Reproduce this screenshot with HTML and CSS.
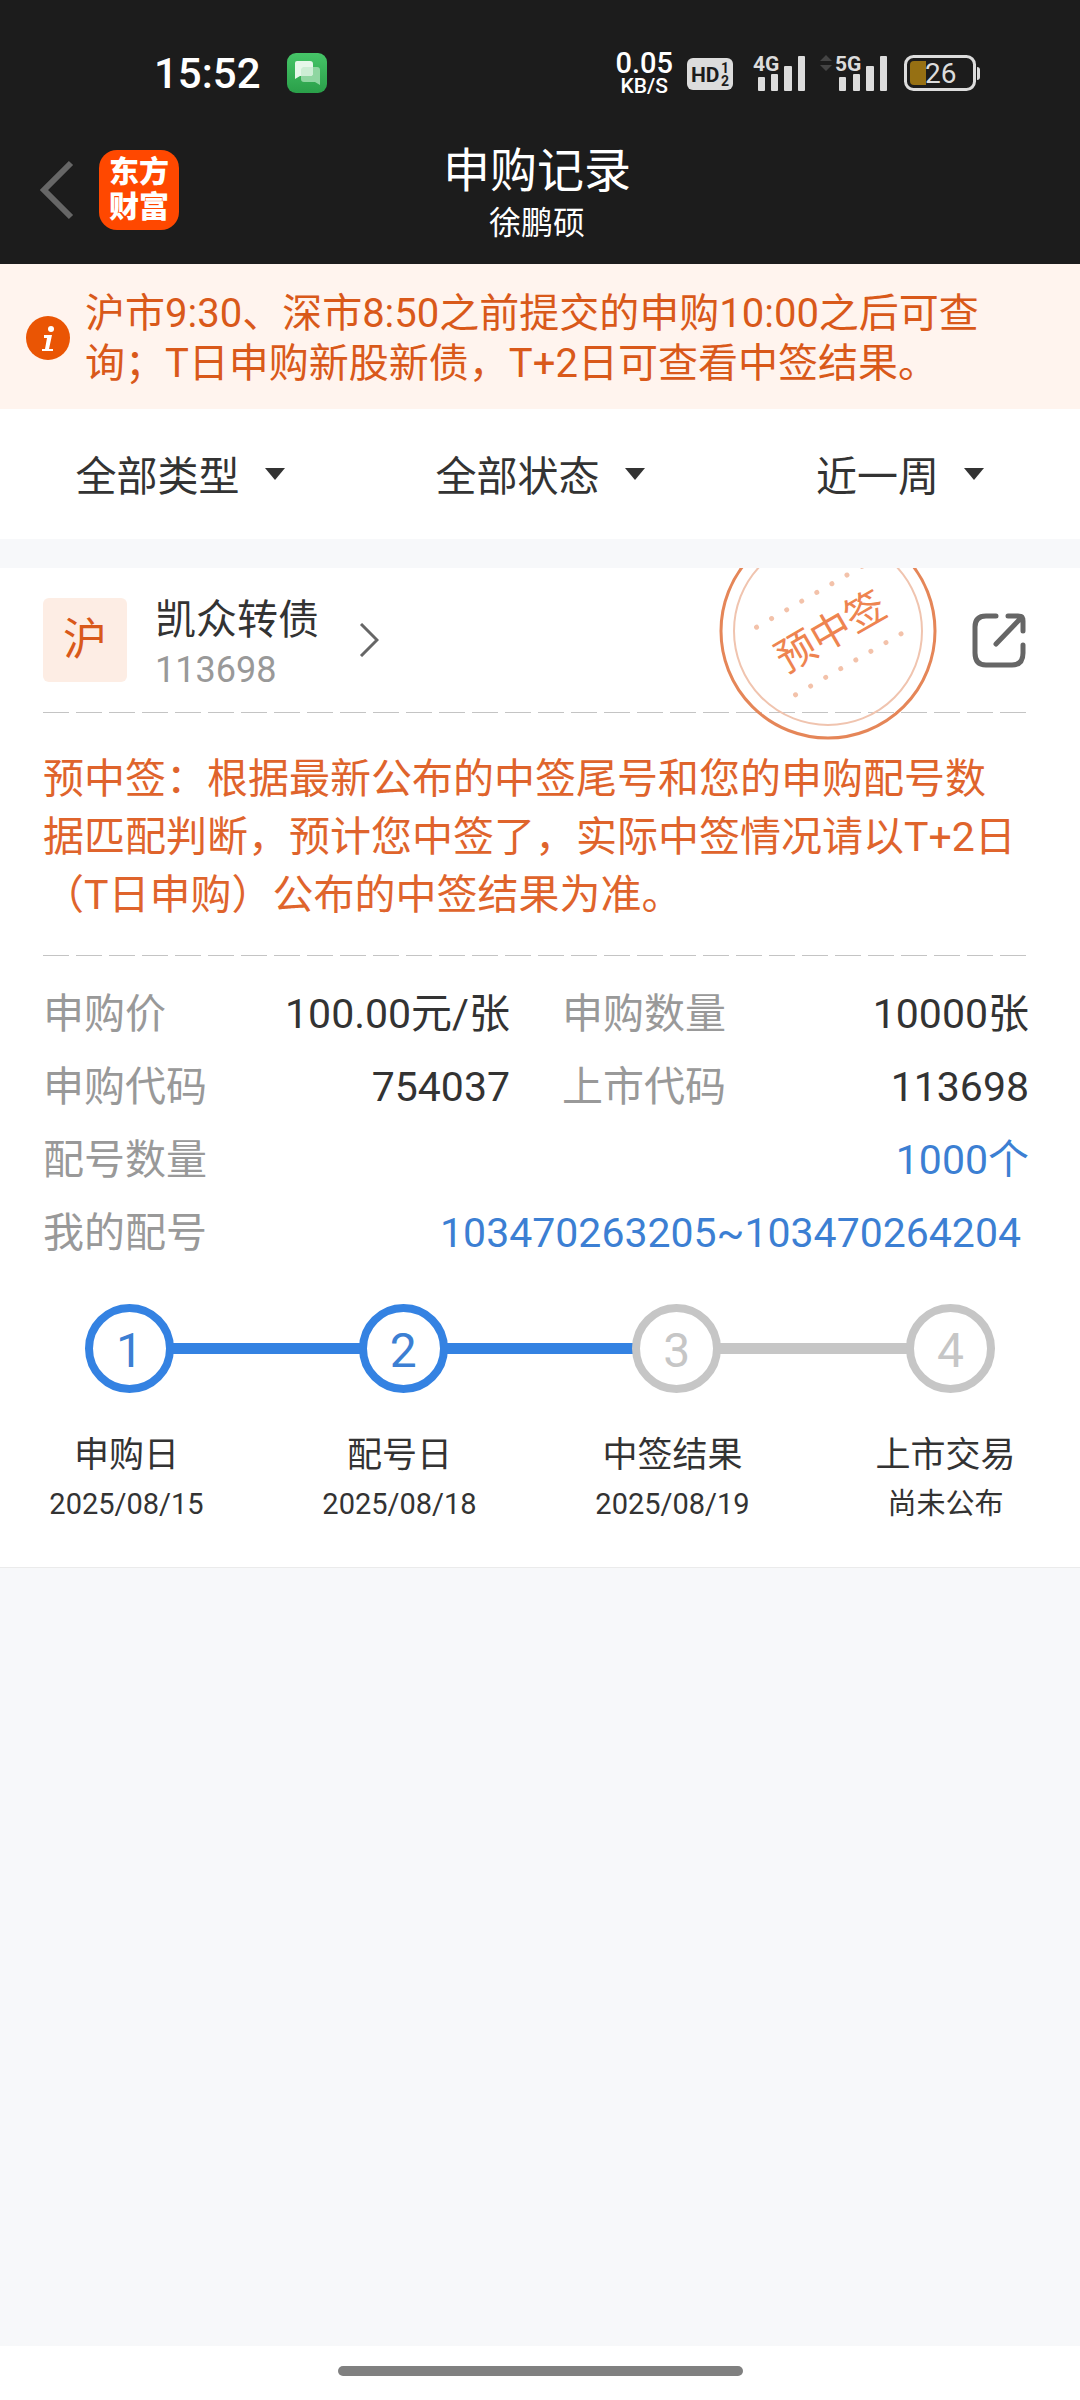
FILE: index.html
```html
<!DOCTYPE html>
<html lang="zh-CN">
<head>
<meta charset="utf-8">
<meta name="viewport" content="width=device-width">
<title>申购记录</title>
<link rel="stylesheet" href="styles.css">
</head>
<body>
<header class="top">
  <div class="status">
    <span class="clock">15:52</span>
    <svg class="msg" width="40" height="40" viewBox="0 0 40 40" aria-hidden="true">
      <defs><linearGradient id="green" x1="0" y1="0" x2="0" y2="1"><stop offset="0" stop-color="#46c568"/><stop offset="1" stop-color="#2a9f49"/></linearGradient></defs>
      <rect width="40" height="40" rx="9" fill="url(#green)"/>
      <path d="M16 14h14q3 0 3 3v15l-5-3H17q-3 0-3-3V16z" fill="#8fd6a1"/>
      <path d="M10 8h13q3 0 3 3v9q0 3-3 3H13l-5 3V10q0-2 2-2z" fill="#e6f7ea"/>
      <path d="M16 14h10v6q0 3-3 3h-9v-7z" fill="#cdeed5"/>
    </svg>
    <span class="speed"><b>0.05</b><small>KB/S</small></span>
    <svg class="hd" width="46" height="32" viewBox="0 0 46 32" aria-hidden="true">
      <rect width="46" height="32" rx="6" fill="#dcdcdc"/>
      <text class="tiny" x="4" y="24" font-size="21" fill="#1c1c1c">HD</text>
      <text class="tiny" x="34" y="15" font-size="14" fill="#1c1c1c">1</text>
      <text class="tiny" x="34" y="28" font-size="14" fill="#1c1c1c">2</text>
    </svg>
    <svg class="signal" width="53" height="40" viewBox="0 0 53 40" aria-hidden="true">
      <text class="tiny" x="0" y="18" font-size="21" fill="#dcdcdc">4G</text>
      <g fill="#dcdcdc"><rect x="5" y="24" width="7" height="14" rx="1"/><rect x="18" y="21" width="7" height="17" rx="1"/><rect x="31" y="13" width="8" height="25" rx="1"/><rect x="45" y="3" width="7" height="35" rx="1"/></g>
    </svg>
    <svg class="signal5" width="69" height="40" viewBox="0 0 69 40" aria-hidden="true">
      <path d="M0 8l6-6 6 6zM0 12h12l-6 6z" fill="#444"/>
      <text class="tiny" x="15" y="18" font-size="21" fill="#dcdcdc">5G</text>
      <g fill="#dcdcdc"><rect x="19" y="24" width="7" height="14" rx="1"/><rect x="33" y="21" width="7" height="17" rx="1"/><rect x="46" y="13" width="8" height="25" rx="1"/><rect x="60" y="3" width="7" height="35" rx="1"/></g>
    </svg>
    <svg class="battery" width="77" height="36" viewBox="0 0 77 36" aria-hidden="true">
      <rect x="1.500" y="1.500" width="69" height="33" rx="8" fill="none" stroke="#dcdcdc" stroke-width="3"/>
      <path d="M10 6h12v24H10q-4 0-4-4V10q0-4 4-4z" fill="#967013"/>
      <text class="num" x="21" y="28" font-size="28" fill="#dcdcdc">26</text>
      <path d="M73 12q3 0 3 3v7q0 3-3 3z" fill="#dcdcdc"/>
    </svg>
  </div>
  <nav class="nav">
    <div class="nav-left">
      <button class="icon-btn" type="button" aria-label="返回">
        <svg width="34" height="60" viewBox="0 0 34 60"><path d="M31 3L4 30l27 27" fill="none" stroke="#666" stroke-width="6"/></svg>
      </button>
      <span class="logo">东方<br>财富</span>
    </div>
    <div class="titles">
      <h1>申购记录</h1>
      <p>徐鹏硕</p>
    </div>
  </nav>
</header>

<main>
  <section class="notice">
    <svg width="44" height="44" viewBox="0 0 44 44" aria-hidden="true">
      <circle cx="22" cy="22" r="22" fill="#ea5504"/>
      <circle cx="25" cy="13" r="3" fill="#fff"/>
      <path d="M18 19h8l-3 14h4v2H16v-2h3l2-11h-3z" fill="#fff"/>
    </svg>
    <p>沪市9:30、深市8:50之前提交的申购10:00之后可查询；T日申购新股新债，T+2日可查看中签结果。</p>
  </section>

  <form class="filters">
    <label class="filter"><select aria-label="类型"><option>全部类型</option></select><svg width="20" height="12" viewBox="0 0 20 12"><path d="M0 0h20L10 12z" fill="#333"/></svg></label>
    <label class="filter"><select aria-label="状态"><option>全部状态</option></select><svg width="20" height="12" viewBox="0 0 20 12"><path d="M0 0h20L10 12z" fill="#333"/></svg></label>
    <label class="filter"><select aria-label="时间"><option>近一周</option></select><svg width="20" height="12" viewBox="0 0 20 12"><path d="M0 0h20L10 12z" fill="#333"/></svg></label>
  </form>

  <article class="card">
    <svg class="stamp" width="218" height="218" viewBox="0 0 218 218" role="img" aria-label="预中签">
      <circle cx="109" cy="109" r="107" fill="none" stroke="#e58658" stroke-width="3"/>
      <circle cx="109" cy="109" r="94" fill="none" stroke="#f0c4af" stroke-width="2"/>
      <g transform="rotate(-30 109 109)">
        <text class="stamp-text" x="111" y="125" text-anchor="middle">预中签</text>
        <path d="M49 70h122M49 148h122" stroke="#f3c2aa" stroke-width="5" stroke-linecap="round" stroke-dasharray="0 17.400"/>
      </g>
    </svg>
    <div class="stock">
      <span class="badge">沪</span>
      <a class="stock-link" href="#detail">
        <span class="stock-text"><strong>凯众转债</strong><span>113698</span></span>
        <svg width="20" height="34" viewBox="0 0 20 34" aria-hidden="true"><path d="M2 1l16 16L2 33" fill="none" stroke="#666" stroke-width="3"/></svg>
      </a>
      <button class="icon-btn share" type="button" aria-label="分享">
        <svg width="56" height="56" viewBox="0 0 56 56" fill="none" stroke="#666" stroke-width="5" stroke-linecap="round" stroke-linejoin="round"><path d="M25 4H15Q4 4 4 15v26q0 12 11 12h26q11 0 11-12V33M37 4h10q5 0 5 5v10M51 5L25 32"/></svg>
      </button>
    </div>
    <hr class="dash">
    <p class="hint">预中签：根据最新公布的中签尾号和您的申购配号数据匹配判断，预计您中签了，实际中签情况请以T+2日（T日申购）公布的中签结果为准。</p>
    <hr class="dash">
    <dl class="facts">
      <div><dt>申购价</dt><dd>100.00元/张</dd></div>
      <div><dt>申购数量</dt><dd>10000张</dd></div>
      <div><dt>申购代码</dt><dd>754037</dd></div>
      <div><dt>上市代码</dt><dd>113698</dd></div>
      <div class="wide"><dt>配号数量</dt><dd><a href="#count">1000个</a></dd></div>
      <div class="wide"><dt>我的配号</dt><dd class="inset"><a href="#numbers">103470263205~103470264204</a></dd></div>
    </dl>
    <div class="track">
      <span class="dot done">1</span><i class="bar done"></i>
      <span class="dot done">2</span><i class="bar done"></i>
      <span class="dot">3</span><i class="bar"></i>
      <span class="dot">4</span>
    </div>
    <ol class="steps">
      <li><span>申购日</span><small>2025/08/15</small></li>
      <li><span>配号日</span><small>2025/08/18</small></li>
      <li><span>中签结果</span><small>2025/08/19</small></li>
      <li><span>上市交易</span><small>尚未公布</small></li>
    </ol>
  </article>
</main>
<footer class="home"><span></span></footer>
</body>
</html>
```
FILE: styles.css
```css
* { box-sizing: border-box; margin: 0; padding: 0; }

body {
  min-height: 100vh;
  display: flex;
  flex-direction: column;
  background: #fff;
  color: #333;
  font-family: Roboto, "Noto Sans CJK SC", sans-serif;
  font-size: 41px;
}
svg { display: block; flex: none; }
a { color: inherit; text-decoration: none; }
.icon-btn { border: 0; background: none; display: block; }

.top { background: #1c1c1c; color: #fff; }

.status {
  display: flex;
  align-items: center;
  height: 108px;
  padding: 38px 99px 0 154px;
}
.clock { font-size: 42px; font-weight: 500; }
.msg { margin-left: 26px; }
.speed {
  margin-left: auto;
  display: flex;
  flex-direction: column;
  align-items: center;
  padding-top: 2px;
}
.speed b { font-size: 29px; line-height: 24px; font-weight: 500; }
.speed small { font-size: 21px; line-height: 22px; font-weight: 500; }
.hd { margin: 2px 20px 0 14px; }
.signal { margin-right: 14px; }
.signal5 { margin-right: 15px; }
.tiny { font-weight: 700; }

.nav {
  display: grid;
  grid-template-columns: 1fr auto 1fr;
  align-items: center;
  padding: 31px 46px 23px 40px;
}
.nav-left { display: flex; align-items: center; gap: 25px; }
.logo {
  width: 80px;
  height: 80px;
  padding-top: 4px;
  border-radius: 18px;
  background: #ff4800;
  font-size: 30px;
  line-height: 35px;
  font-weight: 900;
  text-align: center;
}
.titles { padding-top: 2px; text-align: center; }
.titles h1 { font-size: 47px; line-height: 60px; font-weight: 400; }
.titles p { margin-top: 4px; font-size: 32px; line-height: 36px; }

.notice {
  display: flex;
  align-items: center;
  gap: 15px;
  padding: 22px 70px 20px 26px;
  background: #fff4ee;
  color: #d9591a;
}
.notice p { padding-top: 3px; font-size: 40px; line-height: 50px; }

.filters {
  display: grid;
  grid-template-columns: repeat(3, 1fr);
  height: 130px;
  background: #fff;
}
.filter { display: flex; align-items: center; justify-content: center; gap: 25px; }
.filter select {
  appearance: none;
  border: 0;
  padding-top: 5px;
  background: none;
  color: inherit;
  font: inherit;
  line-height: 60px;
}

main { flex: 1; background: #f7f8fa; }

.card {
  position: relative;
  overflow: hidden;
  margin-top: 29px;
  padding: 0 51px 43px 43px;
  border-bottom: 1px solid #ebebeb;
  background: #fff;
}
.stamp { position: absolute; top: -46px; right: 143px; }
.stamp-text { font-size: 40px; fill: #ee8450; }

.stock { display: flex; align-items: center; height: 144px; }
.badge {
  width: 84px;
  height: 84px;
  border-radius: 6px;
  background: #fdede4;
  color: #d9591a;
  font-size: 44px;
  line-height: 84px;
  text-align: center;
}
.stock-link { display: flex; align-items: center; gap: 40px; margin-left: 28px; }
.stock-text { display: flex; flex-direction: column; padding-top: 10px; line-height: 50px; }
.stock-text strong { font-weight: 400; }
.stock-text span { color: #999; font-size: 36px; }
.share { margin: 0 2px 0 auto; }

.dash {
  height: 1px;
  border: 0;
  background: repeating-linear-gradient(90deg, #c4c4c4 0 26px, transparent 26px 33px);
}

.hint { padding: 37px 8px 31px 0; color: #df642c; line-height: 58px; }

.facts {
  display: grid;
  grid-template-columns: 1fr 1fr;
  column-gap: 52px;
  padding-top: 22px;
  line-height: 73px;
}
.facts div { display: flex; justify-content: space-between; }
.facts .wide { grid-column: 1 / -1; }
.facts dt { color: #999; }
.facts a { color: #3c7fd3; }
.facts .inset { padding-right: 8px; }

.track { display: flex; align-items: center; padding: 34px 34px 0 42px; }
.dot {
  flex: none;
  width: 89px;
  height: 89px;
  border: 8px solid #c6c6c6;
  border-radius: 50%;
  color: #c6c6c6;
  font-size: 48px;
  line-height: 77px;
  text-align: center;
}
.dot.done { border-color: #3482e2; color: #3c7fd3; }
.bar { flex: 1; height: 11px; margin: 0 -1px; background: #c6c6c6; }
.bar.done { background: #3482e2; }

.steps { display: flex; justify-content: space-between; padding-top: 39px; list-style: none; }
.steps li { width: 167px; text-align: center; }
.steps span { display: block; font-size: 35px; line-height: 48px; }
.steps small { display: block; margin-top: 4px; font-size: 29px; line-height: 40px; }

.home { display: flex; justify-content: center; height: 54px; padding-top: 20px; background: #fff; }
.home span { width: 405px; height: 10px; border-radius: 5px; background: #808080; }
```
